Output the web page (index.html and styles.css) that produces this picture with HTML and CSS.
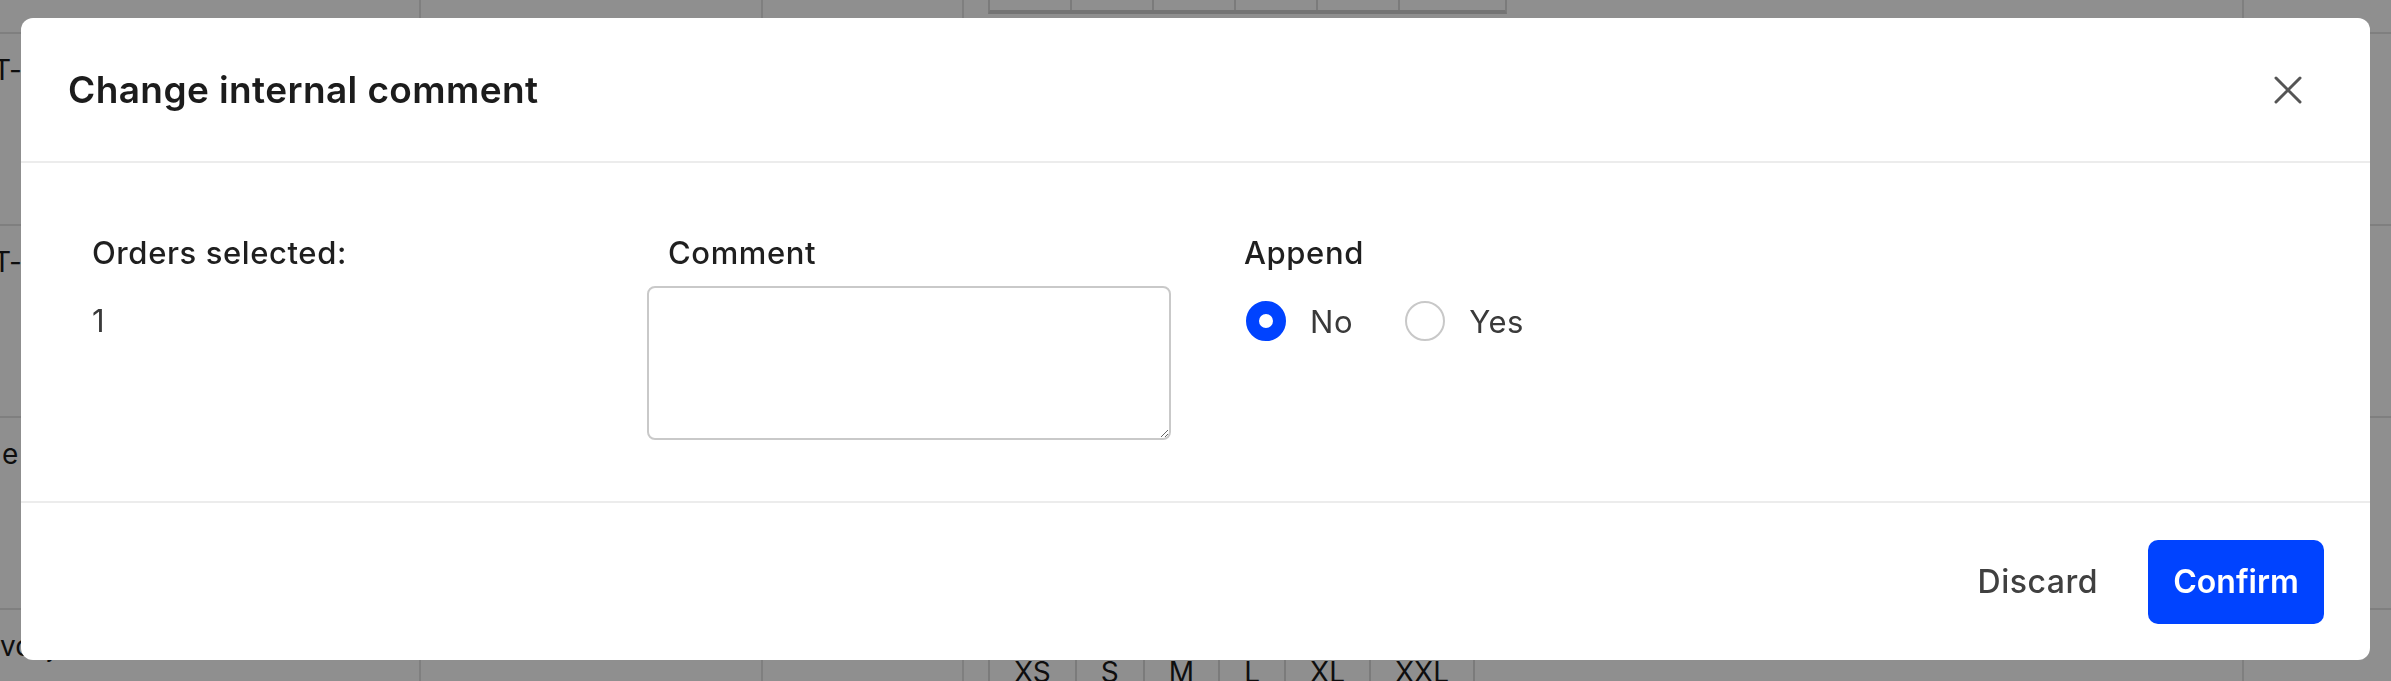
FILE: index.html
```html
<!DOCTYPE html>
<html lang="en">
<head>
<meta charset="utf-8">
<title>Change internal comment</title>
<link rel="stylesheet" href="styles.css">
</head>
<body>
<div class="page">
  <div class="table">
    <div class="row">
      <div class="cell c1"></div>
      <div class="cell c2"></div>
      <div class="cell c3"></div>
      <div class="cell c4">
        <div class="sizes sizes-top">
          <div class="size-row head"><span></span><span></span><span></span><span></span><span></span><span></span></div>
          <div class="size-row vals"><span></span><span></span><span></span><span></span><span></span><span></span></div>
        </div>
      </div>
      <div class="cell c5"></div>
    </div>
    <div class="row">
      <div class="cell c1"><span class="txt">T-shirt</span></div>
      <div class="cell c2"></div>
      <div class="cell c3"></div>
      <div class="cell c4"></div>
      <div class="cell c5"></div>
    </div>
    <div class="row">
      <div class="cell c1"><span class="txt">T-shirt</span></div>
      <div class="cell c2"></div>
      <div class="cell c3"></div>
      <div class="cell c4"></div>
      <div class="cell c5"></div>
    </div>
    <div class="row">
      <div class="cell c1"><span class="txt t3">e&nbsp;&nbsp;&nbsp;shirt</span></div>
      <div class="cell c2"></div>
      <div class="cell c3"></div>
      <div class="cell c4"></div>
      <div class="cell c5"></div>
    </div>
    <div class="row">
      <div class="cell c1"><span class="txt t4">vo&nbsp;&nbsp;jacket</span></div>
      <div class="cell c2"></div>
      <div class="cell c3"></div>
      <div class="cell c4">
        <div class="sizes">
          <div class="size-row head"><span>XS</span><span>S</span><span>M</span><span>L</span><span>XL</span><span>XXL</span></div>
          <div class="size-row vals"><span>1</span><span>2</span><span>3</span><span>2</span><span>1</span><span>0</span></div>
        </div>
      </div>
      <div class="cell c5"></div>
    </div>
  </div>
</div>

<div class="overlay">
  <div class="modal" role="dialog" aria-labelledby="modal-title">
    <header class="modal-header">
      <h2 id="modal-title" class="modal-title">Change internal comment</h2>
      <button class="close-btn" aria-label="Close">
        <svg width="28" height="28" viewBox="0 0 28 28" fill="none" stroke="#555" stroke-width="3" stroke-linecap="round">
          <path d="M2 2 L26 26 M26 2 L2 26"/>
        </svg>
      </button>
    </header>
    <div class="modal-body">
      <div class="field f-orders">
        <div class="label">Orders selected:</div>
        <div class="value">1</div>
      </div>
      <div class="field f-comment">
        <label class="label label-indent" for="comment">Comment</label>
        <textarea id="comment" class="comment-box"></textarea>
      </div>
      <div class="field f-append">
        <div class="label">Append</div>
        <div class="radios">
          <label class="radio"><span class="radio-dot checked"></span><span>No</span></label>
          <label class="radio"><span class="radio-dot"></span><span>Yes</span></label>
        </div>
      </div>
    </div>
    <footer class="modal-footer">
      <button class="btn btn-discard">Discard</button>
      <button class="btn btn-confirm">Confirm</button>
    </footer>
  </div>
</div>
</body>
</html>
```

FILE: styles.css
```css
* { box-sizing: border-box; }

html, body {
  margin: 0;
  height: 681px;
  overflow: hidden;
  background: #ffffff;
  font-family: Inter, "Noto Sans", "Liberation Sans", sans-serif;
  color: #1c1c1c;
}

/* underlying page (scrolled) */
.page {
  height: 681px;
  overflow: hidden;
}

.table {
  margin-top: -158px;
}

.row {
  display: flex;
  height: 192px;
  border-bottom: 2px solid #e2e2e2;
}

.cell {
  border-right: 2px solid #e2e2e2;
  padding-top: 16px;
  font-size: 28px;
  line-height: 40px;
  color: #1a1a1a;
  overflow: hidden;
  white-space: nowrap;
}

.c1 { width: 421px; }
.c2 { width: 342px; }
.c3 { width: 201px; }
.c4 { width: 1280px; padding-top: 30px; }
.c5 { flex: 1; border-right: none; }

.txt { display: inline-block; margin-left: -7px; }
.txt.t3 { margin-left: 2px; }
.txt.t4 { margin-left: 0; }

.sizes {
  margin-left: 24px;
  display: inline-flex;
  flex-direction: column;
  border: 2px solid #dcdcdc;
  border-bottom-width: 4px;
  border-bottom-color: #cfcfcf;
}

.size-row { display: flex; }
.size-row span {
  padding: 0 24px;
  min-width: 66px;
  text-align: center;
  border-right: 2px solid #dcdcdc;
  font-size: 28px;
}
.size-row span:last-child { border-right: none; }
.size-row.head span { height: 52px; line-height: 60px; }
.size-row.vals span { height: 84px; line-height: 84px; border-top: 2px solid #dcdcdc; }

.sizes-top .size-row span { min-width: 82px; }
.sizes-top .size-row span:last-child { min-width: 105px; }

/* overlay + modal */
.overlay {
  position: fixed;
  inset: 0;
  background: rgba(0, 0, 0, 0.44);
  display: flex;
  padding: 18px 21px 21px;
}

.modal {
  flex: 1;
  display: flex;
  flex-direction: column;
  background: #ffffff;
  border-radius: 12px;
  overflow: hidden;
}

.modal-header {
  flex: none;
  height: 145px;
  border-bottom: 2px solid #ececec;
  display: flex;
  align-items: center;
  justify-content: space-between;
  padding: 0 60px 0 47px;
}

.modal-title {
  margin: 0;
  font-size: 37px;
  font-weight: 600;
  letter-spacing: 0.4px;
  color: #1c1c1c;
}

.close-btn {
  width: 44px;
  height: 44px;
  border: none;
  background: transparent;
  padding: 0;
  display: flex;
  align-items: center;
  justify-content: center;
}

.modal-body {
  flex: 1;
  display: flex;
  padding: 70px 0 0 71px;
}

.field { display: flex; flex-direction: column; }
.f-orders { width: 555px; }
.f-comment { width: 597px; }
.f-append { flex: 1; }

.label {
  font-size: 31px;
  font-weight: 500;
  letter-spacing: 0.6px;
  line-height: 40px;
  color: #1f1f1f;
}

.label-indent { padding-left: 21px; margin-bottom: 13px; }

.value {
  margin-top: 28px;
  font-size: 31px;
  line-height: 40px;
  color: #3a3a3a;
}

.comment-box {
  width: 524px;
  height: 154px;
  border: 2px solid #c9c9c9;
  border-radius: 8px;
  font-family: inherit;
  font-size: 28px;
  padding: 12px;
  outline: none;
}

.radios {
  margin-top: 28px;
  display: flex;
  gap: 50px;
}

.radio {
  display: flex;
  align-items: center;
  gap: 24px;
  height: 40px;
  font-size: 31px;
  letter-spacing: 0.6px;
  color: #3a3a3a;
}

.radio-dot {
  width: 40px;
  height: 40px;
  border-radius: 50%;
  border: 2px solid #c8c8c8;
  margin-left: 2px;
}

.radio-dot.checked {
  border: 13px solid #0043ff;
}

.modal-footer {
  flex: none;
  height: 159px;
  border-top: 2px solid #ececec;
  display: flex;
  align-items: center;
  justify-content: flex-end;
  gap: 26px;
  padding: 0 46px 0 0;
}

.btn {
  height: 84px;
  padding: 0 24px;
  border: none;
  font-family: inherit;
  font-size: 32px;
  border-radius: 10px;
}

.btn-discard {
  background: transparent;
  color: #404040;
  font-weight: 500;
  letter-spacing: 0.5px;
}

.btn-confirm {
  background: #0043ff;
  color: #ffffff;
  font-weight: 600;
  width: 176px;
}
```
